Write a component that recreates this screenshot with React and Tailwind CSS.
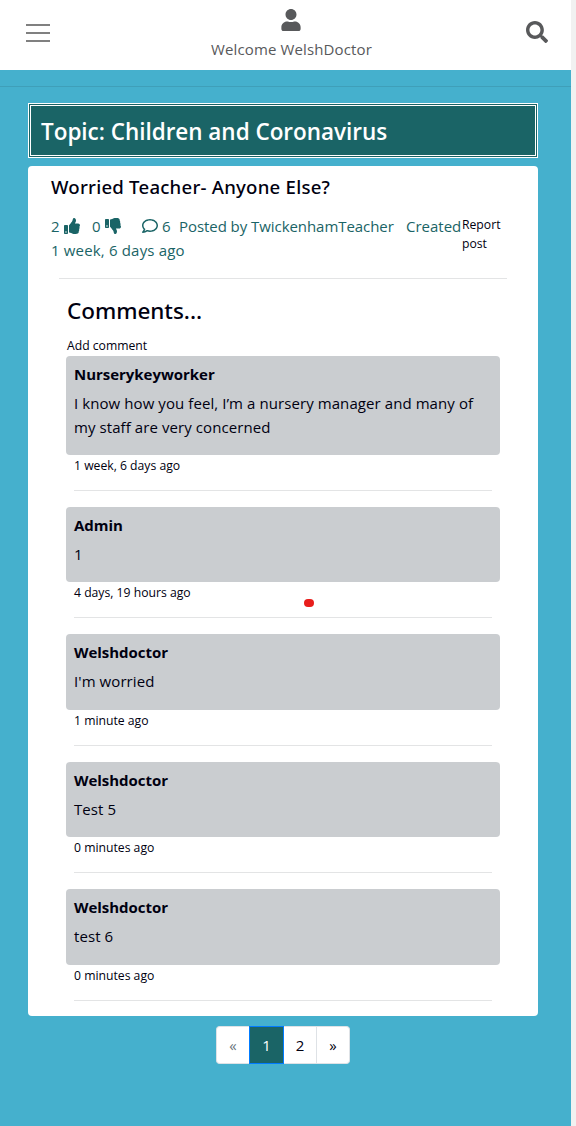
import { FaUser, FaSearch, FaThumbsUp, FaThumbsDown, FaRegComment } from "react-icons/fa";

const comments = [
  { author: "Nurserykeyworker", lines: ["I know how you feel, I’m a nursery manager and many of", "my staff are very concerned"], time: "1 week, 6 days ago" },
  { author: "Admin", lines: ["1"], time: "4 days, 19 hours ago" },
  { author: "Welshdoctor", lines: ["I'm worried"], time: "1 minute ago" },
  { author: "Welshdoctor", lines: ["Test 5"], time: "0 minutes ago" },
  { author: "Welshdoctor", lines: ["test 6"], time: "0 minutes ago" },
];

function Header() {
  return (
    <header className="flex h-[70px] items-start justify-between bg-white pl-[26px] pr-[23px] text-[#58595b]">
      <button aria-label="Menu" className="mt-6 flex w-6 flex-col gap-[6px]">
        <span className="h-[2px] bg-[#808080]" />
        <span className="h-[2px] bg-[#808080]" />
        <span className="h-[2px] bg-[#808080]" />
      </button>
      <div className="flex flex-col items-center pl-[7px] pt-[9px]">
        <FaUser className="size-[22px]" />
        <span className="mt-[6px] text-[15px] leading-6 tracking-[0.13px]">Welcome WelshDoctor</span>
      </div>
      <FaSearch className="mt-[21px] size-[22px]" />
    </header>
  );
}

function Comment({ author, lines, time }) {
  return (
    <article>
      <div className="rounded bg-[#cacdd0] px-2 pb-[16.4px] pt-[6px]">
        <h3 className="mb-[5px] text-[15px] font-bold leading-6 tracking-[-0.03px]">{author}</h3>
        {lines.map((line) => (
          <p key={line} className="whitespace-nowrap text-[15px] leading-6 tracking-[0.08px]">{line}</p>
        ))}
      </div>
      <p className="ml-2 h-[35px] text-[12.2px] leading-[21px]">{time}</p>
      <hr className="mx-2 mb-4 border-[#e3e4e5]" />
    </article>
  );
}

export default function App() {
  return (
    <div className="flex h-[1126px] w-[576px] overflow-hidden bg-[#f1f1f1] font-['Open_Sans','Noto_Sans',sans-serif] text-[#000010]">
      <div className="w-[571px] bg-[#45b0cd]">
        <Header />
        <hr className="mt-4 border-[#3f9fb9]" />
        <main className="ml-7 mt-4 w-[510px]">
          <div className="h-[55px] border-[3px] border-double border-white bg-[#1a6466] pl-[10px] pt-[8px]">
            <h1 className="whitespace-nowrap text-[22.5px] font-semibold leading-9 tracking-[-0.03px] text-white">Topic: Children and Coronavirus</h1>
          </div>
          <section className="mt-2 h-[850px] rounded bg-white">
            <h2 className="pl-[23px] pt-[9px] font-['Noto_Sans'] text-[18.6px] font-medium leading-6 tracking-[0.23px]">Worried Teacher- Anyone Else?</h2>
            <div className="ml-[23px] mt-[15px] flex h-16 whitespace-nowrap text-[#1a6466]">
              <div className="w-[411px] shrink-0 text-[15px] leading-6">
                <div className="flex h-6 items-center">
                  <span className="w-[13px]">2</span>
                  <FaThumbsUp className="size-4" />
                  <span className="ml-3 w-[13px]">0</span>
                  <FaThumbsDown className="size-4" />
                  <FaRegComment className="ml-[21px] size-4" />
                  <span className="ml-[4px] w-[17px]">6</span>
                  <span className="w-[227px] tracking-[-0.06px]">Posted by TwickenhamTeacher</span>
                  <span>Created</span>
                </div>
                <div className="tracking-[0.17px]">1 week, 6 days ago</div>
              </div>
              <a href="#report" className="pt-px text-[12.2px] leading-[19px] text-[#000010]">Report<br />post</a>
            </div>
            <hr className="ml-[31px] mr-[31px] border-[#e3e4e5]" />
            <h2 className="ml-[39px] mt-4 font-['Noto_Sans'] text-[22.5px] font-medium leading-8 tracking-[-0.05px]">Comments...</h2>
            <a href="#add" className="ml-[39px] mt-[9px] block h-[19.55px] text-[12.2px] leading-5">Add comment</a>
            <div className="relative ml-[38px] w-[434px]">
              {comments.map((c, i) => <Comment key={i} {...c} />)}
              <span className="absolute left-[238px] top-[243px] h-2 w-[10px] rounded-full bg-[#e81e1c]" />
            </div>
          </section>
          <nav className="ml-[188px] mt-[10px] flex h-[38px] w-[134px] text-[15px] leading-9">
            <span className="w-[33px] rounded-l border border-r-0 border-[#dee2e6] bg-white text-center text-[#6c757d]">«</span>
            <span className="w-[35px] border border-[#007bff] bg-[#1a6466] text-center text-white">1</span>
            <span className="w-[33px] border border-l-0 border-[#dee2e6] bg-white text-center">2</span>
            <span className="w-[33px] rounded-r border border-l-0 border-[#dee2e6] bg-white text-center">»</span>
          </nav>
        </main>
      </div>
    </div>
  );
}
